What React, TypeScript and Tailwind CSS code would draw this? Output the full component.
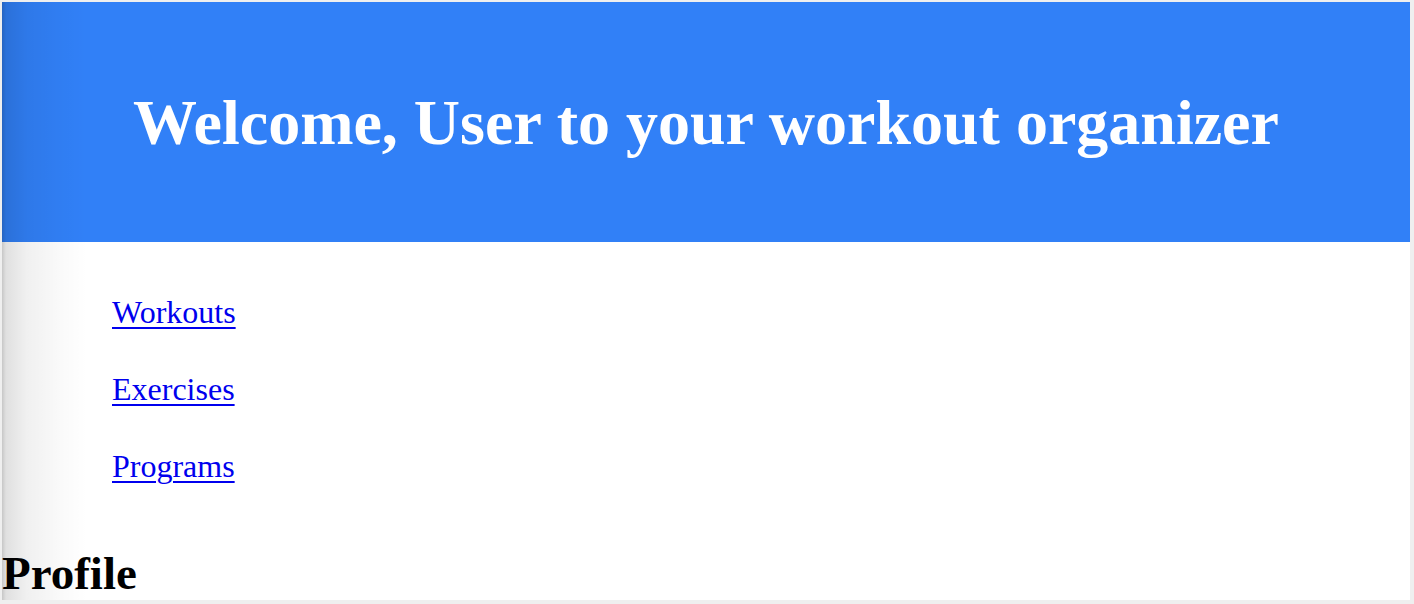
import React from "react";

export default function App() {
  const serif = { fontFamily: '"Liberation Serif", "Times New Roman", serif' };
  return (
    <div className="w-[1414px] h-[604px] bg-[#efefef] pt-[2px] pl-[2px] pr-[4px] pb-[4px] overflow-hidden" style={serif}>
      <div className="relative w-full h-full bg-white overflow-hidden">
        <header className="h-[240px] bg-[#3180f7] flex items-center justify-center">
          <h1 className="text-[64px] font-bold text-white leading-[71px] m-0">
            Welcome, User to your workout organizer
          </h1>
        </header>
        <nav className="pl-[110px] pt-[52px] flex flex-col gap-[40px]">
          <a href="#" className="text-[32px] leading-[37px] text-[#0000ee] underline underline-offset-[4px] decoration-[2px] w-fit">Workouts</a>
          <a href="#" className="text-[32px] leading-[37px] text-[#0000ee] underline underline-offset-[4px] decoration-[2px] w-fit">Exercises</a>
          <a href="#" className="text-[32px] leading-[37px] text-[#0000ee] underline underline-offset-[4px] decoration-[2px] w-fit">Programs</a>
        </nav>
        <h2 className="mt-[61px] text-[47px] font-bold leading-[55px] text-black">Profile</h2>
        <div className="pointer-events-none absolute inset-y-0 left-0 w-[90px] bg-[linear-gradient(to_right,rgba(0,0,0,0.22),rgba(0,0,0,0.12)_4px,rgba(0,0,0,0.06)_25px,rgba(0,0,0,0.02)_60px,transparent_85px)]" />
      </div>
    </div>
  );
}
